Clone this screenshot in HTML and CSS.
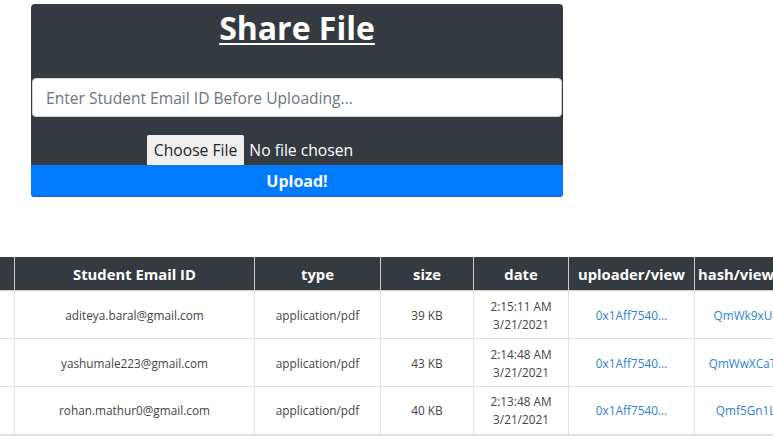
FILE: index.html
```html
<!DOCTYPE html>
<html>
<head>
<meta charset="utf-8">
<link rel="stylesheet" href="styles.css">
</head>
<body>
<div class="page">
  <div class="card">
    <h1 class="title">Share File</h1>
    <div class="email-input">Enter Student Email ID Before Uploading...</div>
    <div class="file-row">
      <span class="choose-btn">Choose File</span>
      <span class="file-status">No file chosen</span>
    </div>
    <div class="upload-btn">Upload!</div>
  </div>

  <div class="table-wrap">
    <table class="files">
      <colgroup>
        <col class="c-id"><col class="c-email"><col class="c-type"><col class="c-size"><col class="c-date"><col class="c-up"><col class="c-hash">
      </colgroup>
      <thead>
        <tr><th>#</th><th>Student Email ID</th><th>type</th><th>size</th><th>date</th><th>uploader/view</th><th class="th-hash">hash/view</th></tr>
      </thead>
      <tbody>
        <tr><td>1</td><td>aditeya.baral@gmail.com</td><td>application/pdf</td><td>39 KB</td><td>2:15:11 AM<br>3/21/2021</td><td><a class="lnk">0x1Aff7540...</a></td><td><a class="lnk">QmWk9xUaBc...</a></td></tr>
        <tr><td>2</td><td>yashumale223@gmail.com</td><td>application/pdf</td><td>43 KB</td><td>2:14:48 AM<br>3/21/2021</td><td><a class="lnk">0x1Aff7540...</a></td><td><a class="lnk">QmWwXCaTe4A...</a></td></tr>
        <tr><td>3</td><td>rohan.mathur0@gmail.com</td><td>application/pdf</td><td>40 KB</td><td>2:13:48 AM<br>3/21/2021</td><td><a class="lnk">0x1Aff7540...</a></td><td><a class="lnk">Qmf5Gn1LbR...</a></td></tr>
      </tbody>
    </table>
  </div>
</div>
</body>
</html>
```

FILE: styles.css
```css
html, body {
  margin: 0;
  padding: 0;
  background: #fff;
  overflow: hidden;
  font-family: "Open Sans", "Noto Sans", sans-serif;
}
.page {
  width: 773px;
  height: 439px;
  overflow: hidden;
}
.card {
  margin: 4px 0 0 31px;
  width: 532px;
  background: #343a40;
  border-radius: 4px;
  display: flex;
  flex-direction: column;
}
.title {
  margin: 0;
  height: 74px;
  box-sizing: border-box;
  padding-top: 4px;
  text-align: center;
  color: #fff;
  font-size: 32px;
  font-weight: 700;
  line-height: 40px;
  text-decoration: underline;
  text-decoration-thickness: 2px;
  text-underline-offset: 3px;
}
.email-input {
  height: 39px;
  box-sizing: border-box;
  margin: 0 1px;
  background: #fff;
  border: 1px solid #ced4da;
  border-radius: 4px;
  padding: 0 13px;
  display: flex;
  align-items: center;
  color: #6c757d;
  font-size: 15.6px;
}
.file-row {
  height: 48px;
  box-sizing: border-box;
  padding: 18px 94px 0 0;
  display: flex;
  align-items: flex-start;
  justify-content: center;
  gap: 5px;
}
.choose-btn {
  height: 30px;
  box-sizing: border-box;
  padding: 0 7px;
  background: #efefef;
  color: #222;
  font-size: 15.7px;
  line-height: 30px;
  border-radius: 2px 2px 0 0;
}
.file-status {
  color: #fff;
  font-size: 15.7px;
  line-height: 30px;
}
.upload-btn {
  height: 32px;
  background: #007bff;
  color: #fff;
  font-weight: 700;
  font-size: 16px;
  line-height: 32px;
  text-align: center;
  border-radius: 0 0 4px 4px;
  border-bottom: 1px solid #1a5fa8;
  box-sizing: border-box;
}
.table-wrap {
  margin-top: 60px;
  overflow: hidden;
  width: 773px;
}
.files {
  margin-left: -60px;
  border-collapse: collapse;
  table-layout: fixed;
  width: 880px;
}
.c-id { width: 74px; }
.c-email { width: 240px; }
.c-type { width: 126px; }
.c-size { width: 93px; }
.c-date { width: 95px; }
.c-up { width: 126px; }
.c-hash { width: 126px; }
.files th {
  background: #343a40;
  color: #fff;
  font-size: 14.8px;
  font-weight: 700;
  height: 33px;
  padding: 0;
  text-align: center;
  border: 1px solid #c9ccd0;
  border-top: 1px solid #343a40;
  box-sizing: border-box;
  white-space: nowrap;
}
.files th.th-hash {
  text-align: left;
  padding-left: 3px;
}
.files td {
  height: 48px;
  padding: 0;
  box-sizing: border-box;
  text-align: center;
  font-size: 11.8px;
  line-height: 18px;
  color: #444;
  border: 1px solid #dee2e6;
  white-space: nowrap;
}
.files tbody tr:last-child td {
  border-bottom: 2px solid #dee2e6;
}
.lnk {
  color: #2d7fd6;
  text-decoration: none;
}
```
